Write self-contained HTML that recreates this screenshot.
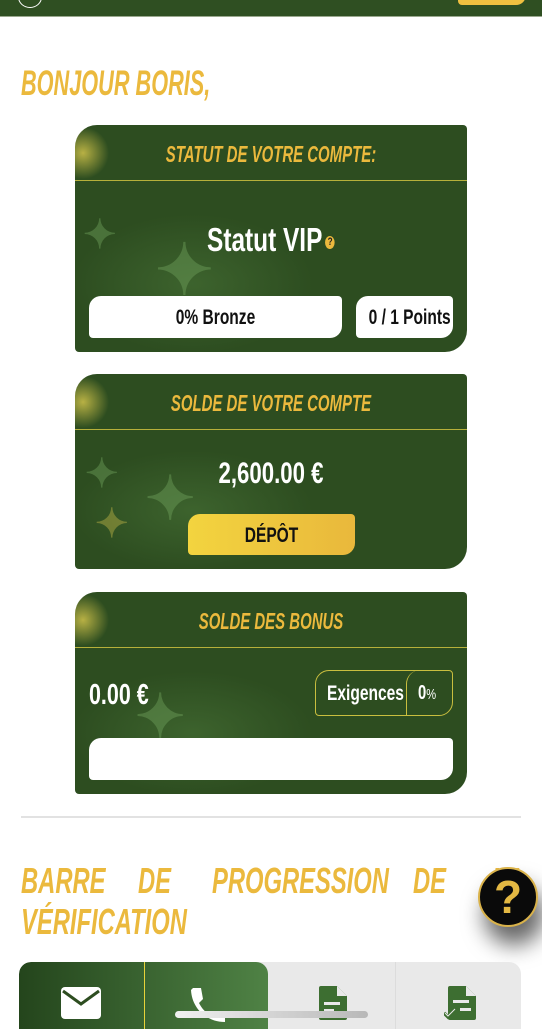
<!DOCTYPE html>
<html><head><meta charset="utf-8">
<style>
*{margin:0;padding:0;box-sizing:border-box}
html,body{width:542px;height:1029px;overflow:hidden;background:#fff}
body{font-family:"Liberation Sans",sans-serif;font-weight:bold;position:relative}
.top{position:absolute;left:0;top:0;width:542px;height:17px;background:#2f4f22;border-bottom:1px solid #9aa88e}
.top .c{position:absolute;left:18px;top:-14px;width:24px;height:22px;border:1.5px solid #fff;border-radius:50%}
.top .b{position:absolute;left:458px;top:-10px;width:68px;height:15px;background:#f0c040;border-radius:0 0 10px 4px}
.sx{transform:scaleX(.74);transform-origin:center;white-space:nowrap}
.sl{display:inline-block;transform:scaleX(.74);transform-origin:left;white-space:nowrap}
.h{position:absolute;color:#ebb93d;font-style:italic;font-size:36px;white-space:nowrap;transform:scaleX(.66);transform-origin:left;line-height:1}
.card{position:absolute;left:75px;width:392px;background:#2d4d20;border-radius:22px 4px 22px 4px;overflow:hidden;
background-image:radial-gradient(circle at 8px 28px,rgba(230,210,80,.75) 0,rgba(230,210,80,0) 26px),radial-gradient(ellipse at 30% 70%,rgba(90,140,70,.35) 0,rgba(0,0,0,0) 120px);}
.card .hd{height:56px;border-bottom:1.5px solid #b6b03a;}
.card .hd div{color:#ebb93d;font-style:italic;font-size:23px;text-align:center;line-height:58px;transform:scaleX(.65);white-space:nowrap}
.star{position:absolute;color:rgba(110,160,90,.45);font-size:40px;line-height:1}
.star.y{color:rgba(190,180,70,.45)}
.w{color:#fff}
.pill{position:absolute;background:#fff;border-radius:12px 4px 12px 4px;text-align:center;line-height:44px;font-size:21px;color:#111}
</style></head><body>
<div class="top"><div class="c"></div><div class="b"></div></div>
<div class="h" style="left:21px;top:66px;font-size:35px;transform:scaleX(.62)">BONJOUR BORIS,</div>

<div class="card" style="top:125px;height:227px">
<div class="hd"><div>STATUT DE VOTRE COMPTE:</div></div>
<span class="star" style="left:8px;top:90px">✦</span>
<span class="star" style="left:80px;top:110px;font-size:70px">✦</span>
<span class="star y" style="left:20px;top:170px">✦</span>
<div class="w sx" style="position:absolute;left:0;width:392px;top:96px;text-align:center;font-size:33px">Statut VIP<span style="display:inline-block;width:13px;height:13px;border-radius:50%;background:#ebb93d;color:#222;font-size:11px;line-height:13px;vertical-align:middle;margin-left:4px">?</span></div>
<div class="pill" style="left:14px;top:171px;width:253px;height:42px"><div class="sx">0% Bronze</div></div>
<div class="pill" style="left:281px;top:171px;width:97px;height:42px"><div class="sx">0 / 1 Points</div></div>
</div>

<div class="card" style="top:374px;height:195px">
<div class="hd"><div>SOLDE DE VOTRE COMPTE</div></div>
<span class="star" style="left:10px;top:80px">✦</span>
<span class="star" style="left:70px;top:95px;font-size:60px">✦</span>
<span class="star y" style="left:20px;top:130px">✦</span>
<div class="w sx" style="position:absolute;left:0;width:392px;top:83px;text-align:center;font-size:30px">2,600.00 €</div>
<div style="position:absolute;left:113px;top:140px;width:167px;height:41px;background:linear-gradient(90deg,#f3d43f,#e9b83c);border-radius:12px 4px 12px 4px;text-align:center;line-height:43px;font-size:21px;color:#111"><div class="sx">DÉPÔT</div></div>
</div>

<div class="card" style="top:592px;height:202px">
<div class="hd"><div>SOLDE DES BONUS</div></div>
<span class="star" style="left:60px;top:95px;font-size:60px">✦</span>
<div class="w" style="position:absolute;left:14px;top:87px;font-size:29px"><span class="sl">0.00 €</span></div>
<div style="position:absolute;left:240px;top:78px;width:138px;height:46px;border:1.5px solid #c9be3f;border-radius:14px 4px 14px 4px"></div>
<div style="position:absolute;left:331px;top:78px;width:47px;height:46px;border-left:1.5px solid #c9be3f;border-radius:14px 0 0 0"></div>
<div class="w" style="position:absolute;left:252px;top:90px;font-size:21px"><span class="sl">Exigences</span></div>
<div class="w" style="position:absolute;left:343px;top:90px;font-size:20px"><span class="sl">0<span style="font-size:15px;font-weight:normal">%</span></span></div>
<div style="position:absolute;left:14px;top:146px;width:364px;height:42px;background:#fff;border-radius:12px 4px 12px 4px"></div>
</div>

<div style="position:absolute;left:21px;top:816px;width:500px;height:2px;background:#e2e2e2"></div>
<div class="h" style="left:21px;top:863px">BARRE</div>
<div class="h" style="left:138px;top:863px">DE</div>
<div class="h" style="left:212px;top:863px">PROGRESSION</div>
<div class="h" style="left:413px;top:863px">DE</div>
<div class="h" style="left:492px;top:863px">LA</div>
<div class="h" style="left:21px;top:904px">VÉRIFICATION</div>

<div style="position:absolute;left:478px;top:867px;width:60px;height:60px;border-radius:50%;background:#0a0a0a;border:2px solid #d9b24a;box-shadow:6px 18px 22px rgba(0,0,0,.6);color:#e3b843;font-size:46px;text-align:center;line-height:56px">?</div>

<div style="position:absolute;left:19px;top:962px;width:502px;height:80px;background:#e9e9e9;border-radius:12px;overflow:hidden">
<div style="position:absolute;left:0;top:0;width:249px;height:80px;background:linear-gradient(90deg,#24451c,#4f8245);border-radius:12px 12px 0 0"></div>
<div style="position:absolute;left:125px;top:0;width:1px;height:80px;background:#e7d23a"></div>
<div style="position:absolute;left:376px;top:0;width:1px;height:80px;background:#dcdcdc"></div>
<svg style="position:absolute;left:42px;top:25px" width="40" height="32" viewBox="0 0 40 32"><rect x="0" y="0" width="40" height="32" rx="4" fill="#fff"/><path d="M2 4 L20 17 L38 4" stroke="#2d4d20" stroke-width="3" fill="none"/></svg>
<svg style="position:absolute;left:168px;top:23px" width="40" height="40" viewBox="0 0 40 40"><path d="M6 3 L14 3 L16 14 L12 18 C15 24 19 28 25 31 L29 27 L38 30 L38 37 C20 37 5 24 4 5 Z" fill="#fff"/></svg>
<svg style="position:absolute;left:300px;top:24px" width="28" height="34" viewBox="0 0 28 34"><path d="M0 2 Q0 0 2 0 L18 0 L28 10 L28 32 Q28 34 26 34 L2 34 Q0 34 0 32Z" fill="#3d6e31"/><path d="M18 0 L18 10 L28 10" fill="#e9e9e9"/><rect x="5" y="16" width="16" height="3" fill="#e9e9e9"/><rect x="5" y="23" width="10" height="3" fill="#e9e9e9"/></svg>
<svg style="position:absolute;left:425px;top:24px" width="32" height="34" viewBox="0 0 32 34"><path d="M4 2 Q4 0 6 0 L22 0 L32 10 L32 32 Q32 34 30 34 L6 34 Q4 34 4 32Z" fill="#3d6e31"/><path d="M22 0 L22 10 L32 10" fill="#e9e9e9"/><rect x="9" y="14" width="16" height="3" fill="#e9e9e9"/><rect x="16" y="22" width="11" height="3" fill="#e9e9e9"/><path d="M0 27 L4 31 L12 22" stroke="#3d6e31" stroke-width="3.5" fill="none"/><path d="M1 27 L4 30 L11 23" stroke="#e9e9e9" stroke-width="1" fill="none"/></svg>
</div>
<div style="position:absolute;left:175px;top:1011px;width:193px;height:7px;border-radius:4px;background:linear-gradient(90deg,#f0f0f0,#b8b8b8)"></div>
</body></html>
